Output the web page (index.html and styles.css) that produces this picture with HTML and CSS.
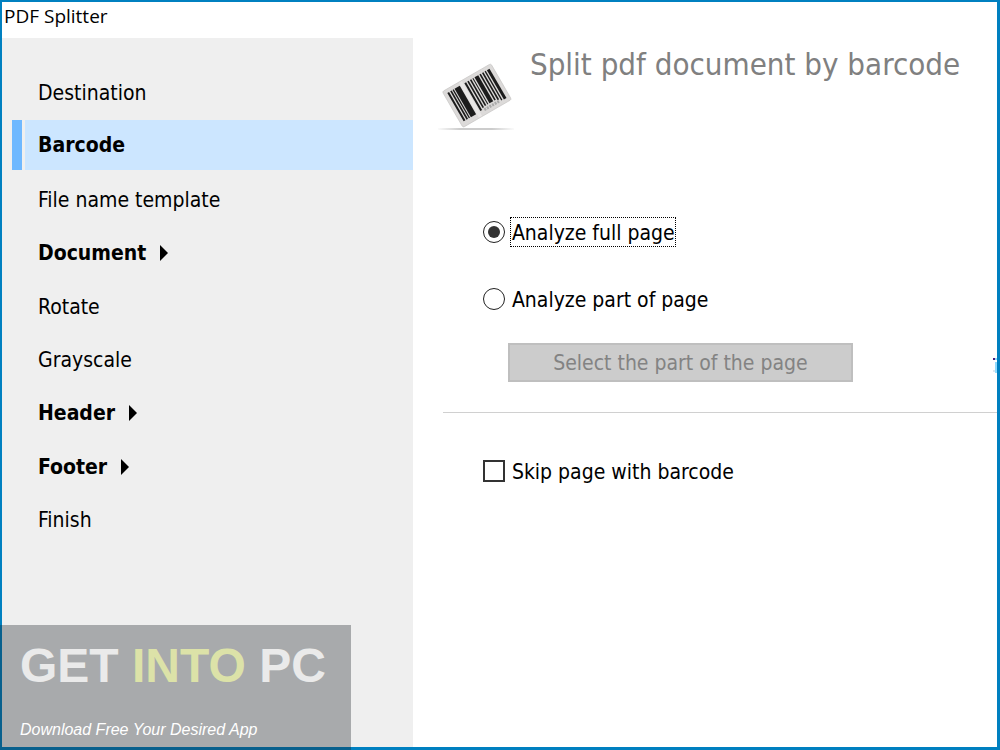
FILE: index.html
```html
<!DOCTYPE html>
<html lang="en">
<head>
    <meta charset="UTF-8">
    <meta name="viewport" content="width=device-width, initial-scale=1.0">
    <title>PDF Splitter</title>
    <link rel="stylesheet" href="styles.css">
</head>
<body>
    <div class="window">
        <div class="titlebar">PDF Splitter</div>
        <div class="content">
            <nav class="sidebar">
                <ul class="steps">
                    <li><a class="step" href="#destination">Destination</a></li>
                    <li><a class="step active" href="#barcode" aria-current="step">Barcode</a></li>
                    <li><a class="step" href="#template">File name template</a></li>
                    <li><a class="step group" href="#document">Document</a></li>
                    <li><a class="step" href="#rotate">Rotate</a></li>
                    <li><a class="step" href="#grayscale">Grayscale</a></li>
                    <li><a class="step group" href="#header">Header</a></li>
                    <li><a class="step group" href="#footer">Footer</a></li>
                    <li><a class="step" href="#finish">Finish</a></li>
                </ul>
            </nav>
            <main class="main">
                <header class="head">
                    <svg class="logo" viewBox="24 60 228 216" aria-hidden="true">
                        <defs>
                            <linearGradient id="shadow">
                                <stop offset="0" stop-color="#ccc" stop-opacity="0"/>
                                <stop offset=".3" stop-color="#ccc"/>
                                <stop offset=".7" stop-color="#ccc"/>
                                <stop offset="1" stop-color="#ccc" stop-opacity="0"/>
                            </linearGradient>
                        </defs>
                        <rect x="18" y="264" width="240" height="6" fill="url(#shadow)"/>
                        <g transform="translate(37 155) rotate(-30)">
                            <rect width="168" height="124" rx="5" fill="#dcdad9" stroke="#c8c6c5" stroke-width="2"/>
                            <!-- left bars -->
                            <g fill="#1c1c1c">
                                <rect x="11" y="11" width="6" height="98"/>
                                <rect x="21" y="11" width="5" height="98"/>
                                <rect x="29" y="11" width="4" height="98"/>
                                <rect x="36" y="11" width="18" height="98"/>
                            </g>
                            <rect x="56" y="2" width="11" height="120" fill="#e9e7e6"/>
                            <!-- right bars -->
                            <g fill="#1c1c1c">
                                <rect x="70" y="11" width="6" height="96"/>
                                <rect x="80" y="11" width="5" height="92"/>
                                <rect x="89" y="11" width="5" height="90"/>
                                <rect x="98" y="11" width="3" height="90"/>
                                <rect x="105" y="11" width="13" height="90"/>
                                <rect x="122" y="11" width="5" height="90"/>
                                <rect x="131" y="11" width="5" height="94"/>
                                <rect x="140" y="11" width="4" height="100"/>
                                <rect x="148" y="11" width="9" height="102"/>
                            </g>
                            <path d="M82 110h54" stroke="#aaa" stroke-width="8" stroke-dasharray="6 3"/>
                        </g>
                    </svg>
                    <h1>Split pdf document by barcode</h1>
                </header>
                <form class="options">
                    <div class="option">
                        <input type="radio" name="area" id="full" checked>
                        <label class="focused" for="full">Analyze full page</label>
                    </div>
                    <div class="option">
                        <input type="radio" name="area" id="part">
                        <label for="part">Analyze part of page</label>
                    </div>
                    <div class="select-row">
                        <button class="select" type="button" disabled>Select the part of the page</button>
                        <svg class="edge" viewBox="0 0 4 16" aria-hidden="true">
                            <path d="M0 0h2v2H0z" fill="#4b1b7b"/>
                            <path d="M2 0h2v2H2zM2 4h2v11H2z" fill="#90dbff"/>
                            <path d="M0 12h2v2H0z" fill="#dbe7f0"/>
                        </svg>
                    </div>
                    <hr>
                    <div class="option">
                        <input type="checkbox" id="skip">
                        <label for="skip">Skip page with barcode</label>
                    </div>
                </form>
            </main>
        </div>
    </div>
    <div class="watermark">
        <div class="brand">GET <span>INTO</span> PC</div>
        <div class="slogan">Download Free Your Desired App</div>
    </div>
</body>
</html>
```
FILE: styles.css
```css
* {
  box-sizing: border-box;
}
body {
  margin: 0;
  position: relative;
  color: #000;
  font: 21px/26px "DejaVu Sans Condensed", "DejaVu Sans", Tahoma, sans-serif;
}
.window {
  display: flex;
  flex-direction: column;
  min-height: 100vh;
  border: 2px solid #0080c0;
  border-right-width: 3px;
  border-bottom-width: 3px;
  background: #fff;
}
.titlebar {
  height: 36px;
  padding: 0 2px;
  font: 19px/29px "Open Sans", "Noto Sans", sans-serif;
}
.content {
  flex: 1;
  display: flex;
}
.sidebar {
  width: 41.3%;
  padding: 29px 0 0 10px;
  background: #efefef;
}
.steps {
  display: grid;
  align-content: space-between;
  min-height: 477px;
  margin: 0;
  padding: 0;
  list-style: none;
}
.step {
  display: flex;
  align-items: center;
  height: 50px;
  padding: 2px 0 0 26px;
  color: #000;
  text-decoration: none;
}
.step.active {
  padding: 0;
  border-left: 10px solid #6eb8ff;
  background: #cce6ff;
  font-weight: bold;
  line-height: 28px;
}
.step.active::before {
  content: "";
  align-self: stretch;
  width: 3px;
  margin-right: 13px;
  background: #efefef;
}
.step.group {
  font-weight: bold;
}
.step.group::after {
  content: "";
  margin-left: 14px;
  border: 8px solid transparent;
  border-left-color: #000;
  border-right-width: 0;
}
.main {
  flex: 1;
  padding-left: 25px;
}
.head {
  display: flex;
  gap: 16px;
  height: 179px;
}
.logo {
  flex: none;
  width: 76px;
  height: 72px;
  margin-top: 22px;
}
h1 {
  margin: 6px 0 0;
  color: #808080;
  font-size: 31px;
  line-height: 40px;
  font-weight: normal;
}
.option {
  display: flex;
  align-items: center;
  gap: 5px;
  height: 30px;
  margin: 0 0 37px 45px;
}
.option input {
  appearance: none;
  display: grid;
  place-items: center;
  width: 22px;
  height: 22px;
  margin: 0;
  border: 2px solid #333;
  background: #fff;
}
.option input[type="radio"] {
  border-width: 1px;
  border-color: #222;
  border-radius: 50%;
}
.option input:checked::before {
  content: "";
  width: 12px;
  height: 12px;
  border-radius: 50%;
  background: #333;
}
.option label {
  padding: 2px 0 0 1px;
  border: 1px solid transparent;
}
.option .focused {
  border: 1px dotted #000;
}
.select-row {
  display: flex;
  justify-content: space-between;
  margin: -8px 0 30px 70px;
}
.select {
  width: 345px;
  height: 39px;
  padding: 0;
  border: 2px solid #bfbfbf;
  background: #ccc;
  color: #838383;
  font: inherit;
}
.edge {
  width: 4px;
  height: 16px;
  margin-top: 15px;
}
hr {
  margin: 0 0 43px 5px;
  border: 0;
  border-top: 1px solid #d0d0d0;
}
.watermark {
  position: absolute;
  left: 0;
  bottom: 0;
  width: 351px;
  height: 125px;
  padding: 12px 20px;
  background: rgba(25, 30, 35, .33);
  color: #eaeaea;
  font-family: "Liberation Sans", Arial, sans-serif;
}
.brand {
  font-size: 48px;
  line-height: 58px;
  font-weight: bold;
  white-space: nowrap;
}
.brand span {
  color: #dce2a8;
}
.slogan {
  margin-top: 25px;
  color: #fff;
  font-size: 16px;
  line-height: 20px;
  font-style: italic;
}
```
